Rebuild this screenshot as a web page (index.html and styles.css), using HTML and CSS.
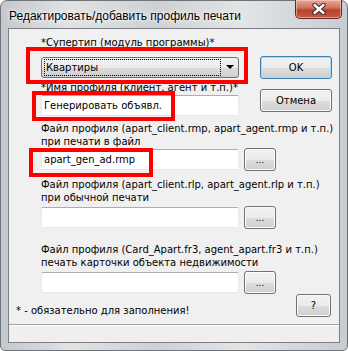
FILE: index.html
```html
<!DOCTYPE html>
<html lang="ru">
<head>
<meta charset="utf-8">
<title>Редактировать/добавить профиль печати</title>
<link rel="stylesheet" href="styles.css">
</head>
<body>
<div class="window">
  <div class="titlebar">
    <div class="title">Редактировать/добавить профиль печати</div>
    <div class="close">
      <svg width="18" height="12" viewBox="0 0 18 12"><path d="M4.5 2 L13.5 10 M13.5 2 L4.5 10" stroke="#3b2b2b" stroke-width="4.4" fill="none" stroke-linecap="round"/><path d="M4.5 2 L13.5 10 M13.5 2 L4.5 10" stroke="#fff" stroke-width="2.4" fill="none" stroke-linecap="round"/></svg>
    </div>
  </div>
  <div class="client">
    <div class="panel">
      <div class="top">
        <div class="top-left">
          <div class="label">*Супертип (модуль программы)*</div>
          <div class="combo">
            <div class="combo-focus">Квартиры</div>
            <div class="combo-arrow"></div>
          </div>
          <div class="label label-name">*Имя профиля (клиент, агент и т.п.)*</div>
          <div class="edit">Генерировать объявл.</div>
        </div>
        <div class="top-right">
          <div class="btn btn-default">OK</div>
          <div class="btn btn-cancel">Отмена</div>
        </div>
      </div>
      <div class="section s1">
        <div class="label2">Файл профиля (apart_client.rmp, apart_agent.rmp и т.п.)<br>при печати в файл</div>
        <div class="file-row">
          <div class="edit">apart_gen_ad.rmp</div>
          <div class="btn btn-dots">...</div>
        </div>
      </div>
      <div class="section s2">
        <div class="label2">Файл профиля (apart_client.rlp, apart_agent.rlp и т.п.)<br>при обычной печати</div>
        <div class="file-row">
          <div class="edit"></div>
          <div class="btn btn-dots">...</div>
        </div>
      </div>
      <div class="section s3">
        <div class="label2">Файл профиля (Card_Apart.fr3, agent_apart.fr3 и т.п.)<br>печать карточки объекта недвижимости</div>
        <div class="file-row">
          <div class="edit"></div>
          <div class="btn btn-dots">...</div>
        </div>
      </div>
      <div class="bottom">
        <div class="note">* - обязательно для заполнения!</div>
        <div class="btn btn-help">?</div>
      </div>
    </div>
    <div class="status"></div>
  </div>
  <div class="mark mark1"></div>
  <div class="mark mark2"></div>
  <div class="mark mark3"></div>
</div>
</body>
</html>
```

FILE: styles.css
```css
html, body {
  margin: 0;
  padding: 0;
}
body {
  width: 348px;
  height: 351px;
  overflow: hidden;
  background: #fff;
  font-family: "DejaVu Sans", Verdana, sans-serif;
  font-size: 10px;
  color: #000;
}
.window {
  position: relative;
  box-sizing: border-box;
  width: 348px;
  height: 351px;
  padding: 0 7px 7px 7px;
  border-radius: 7px 7px 5px 5px;
  background: linear-gradient(90deg, #c4c8cc 0%, #e0e2e4 20%, #ced1d4 45%, #e2e4e6 70%, #c8ccd0 100%);
  border: 1px solid #6f7479;
  display: flex;
  flex-direction: column;
}
.titlebar {
  height: 27px;
  display: flex;
  justify-content: space-between;
  align-items: flex-start;
}
.title {
  margin-top: 8px;
  margin-left: 1px;
  font-family: "Liberation Sans", Arial, sans-serif;
  font-size: 12px;
  line-height: 15px;
  color: #000;
  text-shadow: 0 0 6px #fff, 0 0 3px #fff;
}
.close {
  width: 45px;
  height: 18px;
  margin-top: -1px;
  margin-right: -2px;
  border: 1px solid #5c2a28;
  border-top: none;
  border-radius: 0 0 5px 5px;
  background: linear-gradient(180deg, #e8a899 0%, #d0705c 45%, #b8402c 55%, #c85a42 100%);
  box-shadow: inset 0 0 0 1px rgba(255,220,210,0.5);
  display: flex;
  align-items: center;
  justify-content: center;
}
.client {
  flex: 1;
  border: 1px solid #7c8086;
  background: #f0f0f0;
  display: flex;
  flex-direction: column;
}
.panel {
  height: 296px;
  border-bottom: 1px solid #a0a0a0;
  box-sizing: border-box;
  padding: 7px 8px 0 32px;
  display: flex;
  flex-direction: column;
}
.status {
  flex: 1;
  background: #f0efed;
  border-top: 1px solid #fff;
}
.top {
  display: flex;
  gap: 21px;
}
.top-left {
  width: 198px;
  display: flex;
  flex-direction: column;
}
.top-right {
  display: flex;
  flex-direction: column;
}
.label {
  line-height: 13px;
  white-space: nowrap;
}
.label-name {
  margin-top: 3px;
}
.combo {
  margin-top: 8px;
  height: 21px;
  box-sizing: border-box;
  border: 1px solid #707070;
  border-radius: 3px;
  background: linear-gradient(180deg, #f2f2f2 0%, #ebebeb 50%, #dddddd 51%, #cfcfcf 100%);
  display: flex;
  align-items: center;
  padding: 0 0 0 2px;
}
.combo-focus {
  flex: 1;
  height: 15px;
  line-height: 15px;
  border: 1px dotted #000;
  padding-left: 1px;
}
.combo-arrow {
  width: 17px;
  height: 100%;
  position: relative;
}
.combo-arrow::after {
  content: "";
  position: absolute;
  left: 5px;
  top: 7px;
  border-left: 4px solid transparent;
  border-right: 4px solid transparent;
  border-top: 4px solid #000;
}
.edit {
  margin-top: 1px;
  width: 198px;
  height: 21px;
  box-sizing: border-box;
  background: #fff;
  border: 1px solid #e3e9ef;
  border-top-color: #abadb3;
  border-radius: 2px;
  padding: 0 2px;
  line-height: 19px;
}
.btn {
  box-sizing: border-box;
  height: 23px;
  border: 1px solid #707070;
  border-radius: 3px;
  background: linear-gradient(180deg, #f2f2f2 0%, #ebebeb 50%, #dddddd 51%, #cfcfcf 100%);
  box-shadow: inset 0 0 0 1px #fcfcfc;
  text-align: center;
  line-height: 21px;
}
.btn-default {
  margin-top: 20px;
  width: 72px;
  border-color: #3c7fb1;
  box-shadow: inset 0 0 0 1px #a6ddf5;
}
.btn-cancel {
  margin-top: 10px;
  width: 72px;
}
.section {
  display: flex;
  flex-direction: column;
}
.s1 { margin-top: 6px; }
.s2 { margin-top: 7px; }
.s3 { margin-top: 14px; }
.label2 {
  line-height: 13px;
  white-space: nowrap;
}
.file-row {
  display: flex;
  align-items: center;
  gap: 5px;
  height: 23px;
}
.s2 .file-row { margin-top: 2px; }
.s3 .file-row { margin-top: 2px; }
.file-row .edit {
  margin-top: 0;
}
.btn-dots {
  width: 32px;
  line-height: 22px;
  font-size: 9px;
}
.bottom {
  display: flex;
  justify-content: space-between;
  align-items: flex-end;
  margin-left: -25px;
}
.note {
  line-height: 14px;
  margin-bottom: -1px;
}
.btn-help {
  width: 35px;
}
.mark {
  position: absolute;
  border: 4px solid #ff0000;
  box-sizing: border-box;
}
.mark1 { left: 25px; top: 46px; width: 222px; height: 37px; }
.mark2 { left: 31px; top: 90px; width: 143px; height: 30px; }
.mark3 { left: 28px; top: 147px; width: 124px; height: 29px; }
```
